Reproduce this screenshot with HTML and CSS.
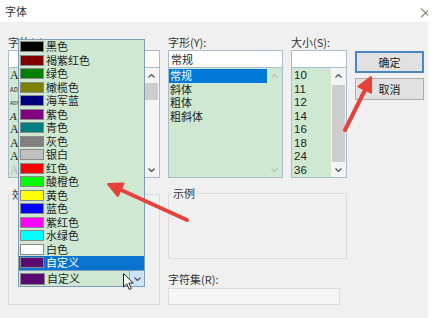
FILE: index.html
```html
<!DOCTYPE html>
<html lang="zh-CN">
<head>
    <meta charset="UTF-8">
    <meta name="viewport" content="width=device-width, initial-scale=1.0">
    <title>字体</title>
    <link rel="stylesheet" href="styles.css">
</head>
<body>
    <div class="dialog">
        <div class="titlebar">
            <span class="title">字体</span>
            <span class="close">×</span>
        </div>

        <div class="main">
            <!-- font name + effects -->
            <div class="col-font">
                <div class="label">字体(F):</div>
                <div class="input"></div>
                <div class="list">
                    <div class="items">
                        <div class="item"><span class="glyph g-serif">A</span></div>
                        <div class="item"><span class="glyph g-tiny">AD</span></div>
                        <div class="item"><span class="glyph g-mini">ADF</span></div>
                        <div class="item"><span class="glyph g-script">Ag</span></div>
                        <div class="item"><span class="glyph g-serif">A</span></div>
                        <div class="item"><span class="glyph g-serif">A</span></div>
                        <div class="item"><span class="glyph g-serif">A</span></div>
                        <div class="item"><span class="glyph g-faint">A</span></div>
                    </div>
                    <div class="scroll">
                        <div class="arrow"><svg width="7" height="4" viewBox="0 0 7 4"><polyline points="0.5,3.5 3.5,0.5 6.5,3.5"/></svg></div>
                        <div class="track"><div class="thumb thumb-font"></div></div>
                        <div class="arrow"><svg width="7" height="4" viewBox="0 0 7 4"><polyline points="0.5,0.5 3.5,3.5 6.5,0.5"/></svg></div>
                    </div>
                </div>

                <fieldset class="group effects">
                    <legend>效果</legend>
                    <div class="combo">
                        <span class="swatch custom"></span>
                        <span class="combo-text">自定义</span>
                        <span class="combo-btn"><svg width="7" height="4" viewBox="0 0 7 4"><polyline points="0.5,0.5 3.5,3.5 6.5,0.5"/></svg></span>
                    </div>
                </fieldset>
            </div>

            <!-- style, size, sample, charset -->
            <div class="col-mid">
                <div class="row">
                    <div class="col-style">
                        <div class="label">字形(Y):</div>
                        <div class="input">常规</div>
                        <div class="list">
                            <div class="items">
                                <div class="item selected">常规</div>
                                <div class="item">斜体</div>
                                <div class="item">粗体</div>
                                <div class="item">粗斜体</div>
                            </div>
                            <div class="scroll scroll-off">
                                <div class="arrow"><svg width="7" height="4" viewBox="0 0 7 4"><polyline points="0.5,3.5 3.5,0.5 6.5,3.5"/></svg></div>
                                <div class="track"></div>
                                <div class="arrow"><svg width="7" height="4" viewBox="0 0 7 4"><polyline points="0.5,0.5 3.5,3.5 6.5,0.5"/></svg></div>
                            </div>
                        </div>
                    </div>
                    <div class="col-size">
                        <div class="label">大小(S):</div>
                        <div class="input"></div>
                        <div class="list size-list">
                            <div class="items">
                                <div class="item">10</div>
                                <div class="item">11</div>
                                <div class="item">12</div>
                                <div class="item">14</div>
                                <div class="item">16</div>
                                <div class="item">18</div>
                                <div class="item">24</div>
                                <div class="item">36</div>
                            </div>
                            <div class="scroll">
                                <div class="arrow"><svg width="7" height="4" viewBox="0 0 7 4"><polyline points="0.5,3.5 3.5,0.5 6.5,3.5"/></svg></div>
                                <div class="track"><div class="thumb thumb-size"></div></div>
                                <div class="arrow"><svg width="7" height="4" viewBox="0 0 7 4"><polyline points="0.5,0.5 3.5,3.5 6.5,0.5"/></svg></div>
                            </div>
                        </div>
                    </div>
                </div>

                <fieldset class="group sample">
                    <legend>示例</legend>
                </fieldset>

                <div class="label charset-label">字符集(R):</div>
                <div class="select"></div>
            </div>

            <div class="col-buttons">
                <div class="btn btn-default">确定</div>
                <div class="btn">取消</div>
            </div>
        </div>

        <!-- opened colour dropdown -->
        <div class="color-menu">
            <div class="color-item"><span class="swatch" style="background:#000000"></span>黑色</div>
            <div class="color-item"><span class="swatch" style="background:#800000"></span>褐紫红色</div>
            <div class="color-item"><span class="swatch" style="background:#008000"></span>绿色</div>
            <div class="color-item"><span class="swatch" style="background:#808000"></span>橄榄色</div>
            <div class="color-item"><span class="swatch" style="background:#000080"></span>海军蓝</div>
            <div class="color-item"><span class="swatch" style="background:#800080"></span>紫色</div>
            <div class="color-item"><span class="swatch" style="background:#008080"></span>青色</div>
            <div class="color-item"><span class="swatch" style="background:#808080"></span>灰色</div>
            <div class="color-item"><span class="swatch" style="background:#c0c0c0"></span>银白</div>
            <div class="color-item"><span class="swatch" style="background:#ff0000"></span>红色</div>
            <div class="color-item"><span class="swatch" style="background:#00ff00"></span>酸橙色</div>
            <div class="color-item"><span class="swatch" style="background:#ffff00"></span>黄色</div>
            <div class="color-item"><span class="swatch" style="background:#0000ff"></span>蓝色</div>
            <div class="color-item"><span class="swatch" style="background:#ff00ff"></span>紫红色</div>
            <div class="color-item"><span class="swatch" style="background:#00ffff"></span>水绿色</div>
            <div class="color-item"><span class="swatch" style="background:#ffffff"></span>白色</div>
            <div class="color-item selected"><span class="swatch custom"></span>自定义</div>
        </div>

        <!-- annotation arrows -->
        <svg class="marks" width="428" height="318" viewBox="0 0 428 318">
            <line x1="187" y1="220" x2="119" y2="189" />
            <polygon points="108,184 123.6,183.4 117.8,196.2" />
            <line x1="345" y1="130" x2="366" y2="88" />
            <polygon points="371,77 371.1,92.7 358.5,86.5" />
        </svg>

        <svg class="cursor" width="12" height="18" viewBox="0 0 12 18">
            <path d="M0.5 0.5 L0.5 14 L3.8 10.8 L6.2 16.5 L8.3 15.6 L5.9 10 L10.3 10 Z" />
        </svg>
    </div>
</body>
</html>
```

FILE: styles.css
```css
* {
    box-sizing: border-box;
}

body {
    margin: 0;
    background: #fff;
    font-family: "Noto Sans CJK SC", "Noto Sans", sans-serif;
    font-size: 11px;
    color: #1e1e1e;
}

.dialog {
    position: relative;
    width: 428px;
    height: 318px;
    background: #f0f0f0;
    overflow: hidden;
}

.titlebar {
    height: 22px;
    background: #fff;
    display: flex;
    align-items: center;
    justify-content: space-between;
    padding-left: 5px;
}

.title {
    color: #333;
}

.close {
    font-size: 15px;
    line-height: 1;
    color: #777;
    margin-right: -5px;
}

.main {
    display: flex;
    gap: 8px;
    padding: 13px 0 0 8px;
}

.col-font {
    width: 152px;
}

.col-mid {
    width: 179px;
}

.row {
    display: flex;
    gap: 8px;
}

.col-style {
    width: 115px;
}

.col-size {
    width: 56px;
}

.col-buttons {
    width: 69px;
    padding-top: 16px;
    display: flex;
    flex-direction: column;
    gap: 5px;
}

.label {
    height: 14px;
    line-height: 14px;
    margin-bottom: 1px;
    white-space: nowrap;
    color: #333;
}

.input {
    height: 18px;
    background: #fff;
    border: 1px solid #a9bccf;
    padding: 0 2px;
    line-height: 16px;
}

.list {
    height: 110px;
    border: 1px solid #a9bccf;
    border-top: 0;
    background: #cfe8d2;
    display: flex;
}

.items {
    flex: 1;
    padding-top: 1px;
    overflow: hidden;
}

.item {
    height: 13.5px;
    line-height: 13.5px;
    padding-left: 1px;
    white-space: nowrap;
}

.item.selected {
    background: #0078d7;
    color: #fff;
}

.size-list .item {
    font-family: "Liberation Sans", sans-serif;
    font-size: 11.5px;
    padding-left: 2px;
}

.glyph {
    display: inline-block;
    width: 10px;
    vertical-align: top;
    color: #222;
}

.g-serif {
    font-family: "Liberation Serif", serif;
    font-size: 12px;
}

.g-tiny {
    font-size: 6px;
}

.g-mini {
    font-size: 5px;
}

.g-script {
    font-family: "DejaVu Serif", serif;
    font-style: italic;
    font-size: 10px;
}

.g-faint {
    font-family: "Liberation Serif", serif;
    font-size: 12px;
    color: #b8b8b8;
}

/* scrollbars */
.scroll {
    width: 15px;
    display: flex;
    flex-direction: column;
    background: #f4f4f4;
}

.scroll-off {
    background: #cfe8d2;
}

.arrow {
    height: 15px;
    display: flex;
    align-items: center;
    justify-content: center;
}

.arrow svg,
.combo-btn svg {
    fill: none;
    stroke: #555;
    stroke-width: 1.3;
}

.scroll-off .arrow svg {
    stroke: #b5c5b8;
}

.track {
    flex: 1;
    padding: 0 1px;
}

.thumb {
    background: #cdcdcd;
}

.thumb-font {
    height: 17px;
}

.thumb-size {
    margin-top: 2px;
    height: 77px;
}

/* group boxes */
.group {
    margin: 0;
    border: 1px solid #dcdcdc;
    min-width: 0;
}

.group legend {
    padding: 0 1px;
    line-height: 14px;
    color: #333;
}

.effects {
    margin-top: 9px;
    height: 118px;
    padding: 0 0 17px 2px;
    display: flex;
    flex-direction: column;
    justify-content: flex-end;
}

.sample {
    margin-top: 8px;
    height: 73px;
    padding: 0 0 0 2px;
}

.sample legend {
    padding: 0 2px;
}

.charset-label {
    margin-top: 13px;
    margin-bottom: 2px;
}

.select {
    width: 172px;
    height: 17px;
    border: 1px solid #dcdcdc;
    background: #f5f5f5;
}

/* colour combo */
.combo {
    width: 127px;
    height: 17px;
    margin-left: 7px;
    border: 1px solid #7f9db9;
    background: #cfe8d2;
    display: flex;
    align-items: center;
    line-height: 15px;
}

.combo .swatch {
    width: 25px;
    height: 12px;
    margin: 0 2px 0 1px;
}

.combo-text {
    flex: 1;
}

.combo-btn {
    width: 15px;
    height: 100%;
    background: #cce4f7;
    border-left: 1px solid #7eb4ea;
    display: flex;
    align-items: center;
    justify-content: center;
}

.swatch {
    display: inline-block;
    width: 24px;
    height: 11px;
    border: 1px solid #8a8a8a;
    margin: 0 2px 0 1px;
}

.swatch.custom {
    background: #5a0b72;
}

/* buttons */
.btn {
    height: 22px;
    line-height: 20px;
    text-align: center;
    background: #e1e1e1;
    border: 1px solid #adadad;
    color: #222;
}

.btn-default {
    border: 2px solid #4a88c2;
    line-height: 18px;
}

/* open dropdown over the dialog */
.color-menu {
    position: absolute;
    left: 18px;
    top: 39px;
    width: 127px;
    background: #cfe8d2;
    border: 1px solid #7f9db9;
    border-bottom: 0;
}

.color-item {
    display: flex;
    align-items: center;
    height: 13.5px;
    line-height: 13.5px;
    white-space: nowrap;
}

.color-item.selected {
    background: #0a72cf;
    color: #fff;
}

.marks {
    position: absolute;
    left: 0;
    top: 0;
    pointer-events: none;
}

.marks line {
    stroke: #e5423b;
    stroke-width: 4;
    stroke-linecap: round;
}

.marks polygon {
    fill: #e5423b;
    stroke: #e5423b;
    stroke-width: 2;
    stroke-linejoin: round;
}

.cursor {
    position: absolute;
    left: 123px;
    top: 273px;
}

.cursor path {
    fill: #fff;
    stroke: #222;
    stroke-width: 1;
    stroke-linejoin: round;
}
```
